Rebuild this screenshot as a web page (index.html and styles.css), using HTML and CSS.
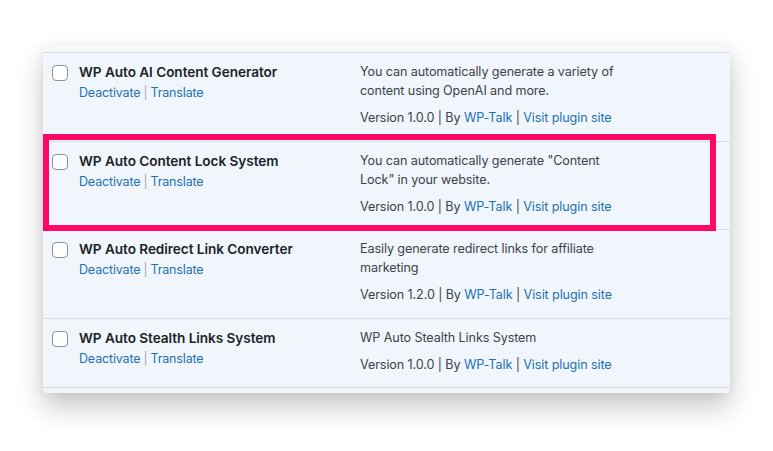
FILE: index.html
```html
<!DOCTYPE html>
<html lang="en">
<head>
<meta charset="utf-8">
<title>Plugins</title>
<link rel="stylesheet" href="styles.css">
</head>
<body>
<div class="card">
  <div class="strip"></div>
  <div class="row">
    <div class="check"><span class="box"></span></div>
    <div class="title">
      <div class="name">WP Auto AI Content Generator</div>
      <div class="actions"><a>Deactivate</a><span class="sep">|</span><a>Translate</a></div>
    </div>
    <div class="desc">
      <p class="text">You can automatically generate a variety of<br>content using OpenAI and more.</p>
      <div class="meta">Version 1.0.0 | By <a>WP-Talk</a> | <a>Visit plugin site</a></div>
    </div>
  </div>
  <div class="row">
    <div class="check"><span class="box"></span></div>
    <div class="title">
      <div class="name">WP Auto Content Lock System</div>
      <div class="actions"><a>Deactivate</a><span class="sep">|</span><a>Translate</a></div>
    </div>
    <div class="desc">
      <p class="text">You can automatically generate "Content<br>Lock" in your website.</p>
      <div class="meta">Version 1.0.0 | By <a>WP-Talk</a> | <a>Visit plugin site</a></div>
    </div>
  </div>
  <div class="row">
    <div class="check"><span class="box"></span></div>
    <div class="title">
      <div class="name">WP Auto Redirect Link Converter</div>
      <div class="actions"><a>Deactivate</a><span class="sep">|</span><a>Translate</a></div>
    </div>
    <div class="desc">
      <p class="text">Easily generate redirect links for affiliate<br>marketing</p>
      <div class="meta">Version 1.2.0 | By <a>WP-Talk</a> | <a>Visit plugin site</a></div>
    </div>
  </div>
  <div class="row">
    <div class="check"><span class="box"></span></div>
    <div class="title">
      <div class="name">WP Auto Stealth Links System</div>
      <div class="actions"><a>Deactivate</a><span class="sep">|</span><a>Translate</a></div>
    </div>
    <div class="desc">
      <p class="text">WP Auto Stealth Links System</p>
      <div class="meta">Version 1.0.0 | By <a>WP-Talk</a> | <a>Visit plugin site</a></div>
    </div>
  </div>
  <div class="row-end"></div>
  <div class="highlight"></div>
</div>
</body>
</html>
```
FILE: styles.css
```css
html, body {
  margin: 0;
  padding: 0;
  background: #ffffff;
}
html {
  height: 100%;
}
body {
  font-family: Inter, "Noto Sans", sans-serif;
  color: #3c434a;
  padding: 45px 0 0 43px;
  min-height: 451px;
  box-sizing: border-box;
}
.card {
  position: relative;
  width: 687px;
  background: #f0f6fc;
  border-radius: 4px;
  box-shadow: 0 14px 28px rgba(0, 0, 0, 0.22), 0 2px 10px rgba(0, 0, 0, 0.06);
}
.strip {
  height: 7px;
  background: #f7f8fa;
  border-radius: 4px 4px 0 0;
}
.row {
  display: flex;
  border-top: 1px solid #dcdcde;
  padding: 9px 0 12.5px 0;
}
.check {
  width: 36px;
  flex: none;
  padding: 3px 0 0 9px;
  box-sizing: border-box;
}
.box {
  display: block;
  width: 16px;
  height: 16px;
  box-sizing: border-box;
  border: 1px solid #8c8f94;
  border-radius: 4px;
  background: #ffffff;
}
.title {
  width: 281px;
  flex: none;
}
.name {
  font-size: 13.6px;
  letter-spacing: -0.05px;
  font-weight: 600;
  line-height: 20px;
  color: #1d2327;
}
.actions {
  font-size: 12.5px;
  letter-spacing: -0.15px;
  line-height: 20px;
  margin-top: 1px;
}
.actions a, .meta a {
  color: #2271b1;
}
.sep {
  color: #a7aaad;
  margin: 0 3px;
}
.desc {
  flex: 1;
  font-size: 12.6px;
  letter-spacing: -0.1px;
}
.text {
  margin: 0 0 8px 0;
  line-height: 19px;
}
.meta {
  line-height: 20px;
}
.row-end {
  border-top: 1px solid #dcdcde;
  height: 5px;
}
.highlight {
  position: absolute;
  left: 0;
  top: 89px;
  width: 673px;
  height: 97px;
  box-sizing: border-box;
  border: 6px solid #fe0866;
}
```
